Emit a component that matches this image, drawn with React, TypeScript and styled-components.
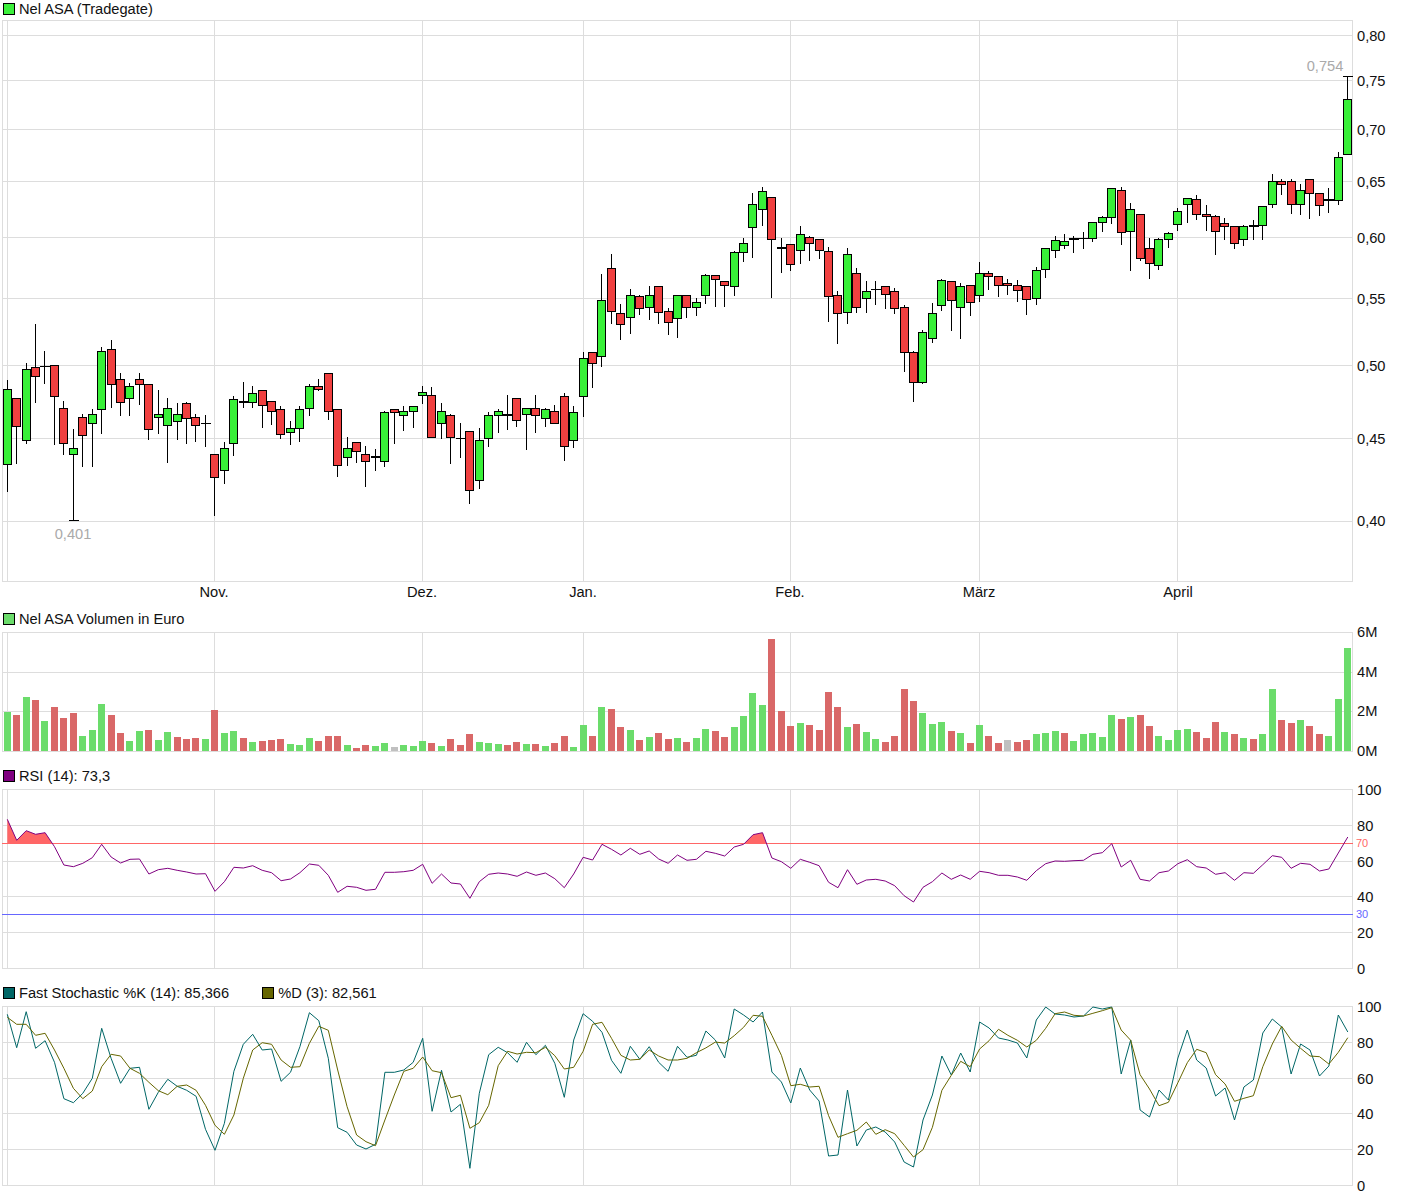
import React from "react";
import styled, { createGlobalStyle } from "styled-components";

const GlobalStyle = createGlobalStyle`
  html, body { margin: 0; padding: 0; background: #fff; }
  body { font-family: "Liberation Sans", Arial, sans-serif; }
`;

const Page = styled.div`
  width: 1410px;
  height: 1200px;
  display: flex;
  flex-direction: column;
  background: #fff;
  overflow: hidden;
`;
const Legend = styled.div`
  height: 18px;
  display: flex;
  align-items: center;
  gap: 4px;
  padding-left: 3px;
  font-size: 14.67px;
  line-height: 18px;
  color: #111;
`;
const Swatch = styled.span<{ $color: string; $offset?: number }>`
  width: 10px;
  height: 10px;
  flex: none;
  border: 1px solid #000;
  background: ${(p) => p.$color};
  margin-left: ${(p) => p.$offset ?? 0}px;
`;
const Plot = styled.svg`
  display: block;
  flex: none;
  width: 1410px;
  overflow: visible;
`;
const AxisText = styled.text`
  font-family: "Liberation Sans", Arial, sans-serif;
  font-size: 14.67px;
  fill: #111;
`;
const MonthText = styled(AxisText)`
  text-anchor: middle;
`;
const ExtremeText = styled.text`
  font-family: "Liberation Sans", Arial, sans-serif;
  font-size: 14.67px;
  fill: #aaa;
  text-anchor: middle;
`;
const LevelText = styled.text<{ $color: string }>`
  font-family: "Liberation Sans", Arial, sans-serif;
  font-size: 11px;
  fill: ${(p) => p.$color};
`;
const GridLine = styled.line`
  stroke: #ddd;
  stroke-width: 1;
  shape-rendering: crispEdges;
`;
const LevelLine = styled.line<{ $color: string }>`
  stroke: ${(p) => p.$color};
  stroke-width: 1;
  shape-rendering: crispEdges;
`;
const Wick = styled.line`
  stroke: #000;
  stroke-width: 1;
  shape-rendering: crispEdges;
`;
const Body = styled.rect<{ $up: boolean }>`
  fill: ${(p) => (p.$up ? "#38f038" : "#f04040")};
  stroke: #000;
  stroke-width: 1;
  shape-rendering: crispEdges;
`;
const VolumeBar = styled.rect<{ $kind: string }>`
  fill: ${(p) => (p.$kind === "g" ? "#6bdc6b" : p.$kind === "r" ? "#d96868" : "#c0c0c0")};
  shape-rendering: crispEdges;
`;
const Curve = styled.polyline<{ $color: string }>`
  fill: none;
  stroke: ${(p) => p.$color};
  stroke-width: 1;
`;
const OverFill = styled.polygon`
  fill: #ff6666;
  stroke: none;
`;

const cx = (i: number) => Math.floor(7.2 + 9.44 * i) + 0.5;
const cxSmooth = (i: number) => 7.3 + 9.44 * i;

const months: [string, number][] = [
  ["Nov.", 214],
  ["Dez.", 422],
  ["Jan.", 583],
  ["Feb.", 790],
  ["März", 979],
  ["April", 1178],
];
const verticals = [2, 7, 214, 422, 583, 790, 979, 1177, 1352];

const candleSrc = `g380,389,464,491 r398,398,426,463 g363,369,440,443 r324,367,376,402 d351,366,366,383 r365,365,396,444 r401,408,443,454 g429,448,454,520 r414,417,435,466 g409,414,423,466
g347,351,409,433 r340,349,384,407 r373,379,402,415 g383,386,398,415 r373,379,384,404 r384,384,429,439 g390,414,417,433 g398,408,425,462 g403,414,421,439 r402,403,418,443
r414,417,425,441 d415,423,423,446 r454,454,477,515 g442,448,470,483 g396,399,443,455 t382,401,401,407 g386,393,402,407 r390,390,405,427 r401,401,411,424 r406,409,434,438
g421,428,432,444 g406,409,428,441 g384,386,408,415 r379,386,389,390 r373,373,411,419 r409,409,465,476 g437,448,457,465 r442,442,451,462 r446,454,461,486 t449,456,456,470
g411,412,461,466 r409,409,412,443 g406,411,415,430 g406,406,411,427 g386,392,395,403 r387,395,437,437 g403,411,423,438 r414,415,437,463 d423,438,438,457 r431,431,490,503
g428,440,480,488 g412,415,438,446 g409,411,415,432 t395,414,414,429 r398,398,420,426 g408,408,414,449 r395,408,415,432 g408,409,418,426 r405,411,423,423 r393,396,446,460
g406,412,440,447 g352,358,396,416 r352,352,363,387 g274,300,356,366 r254,268,311,323 r304,313,324,339 g289,295,317,333 r295,296,308,314 g286,295,307,319 r286,286,312,323
r308,311,322,334 g295,295,318,337 r295,295,307,317 g298,302,307,315 g274,275,295,303 r275,275,279,306 r281,281,285,306 g251,252,286,295 g238,243,252,261 g193,204,227,257
g187,191,209,225 r197,197,239,297 t238,247,247,272 r244,244,264,270 g226,234,250,263 r236,237,243,260 r239,239,250,258 r247,251,296,321 r291,295,313,343 g248,254,312,323
r268,273,307,312 g281,291,298,312 d281,289,289,304 r286,286,294,308 r288,291,308,313 r305,307,352,371 r351,352,382,401 g330,332,382,383 g303,313,338,342 g279,280,305,310
r281,281,300,330 g283,286,307,338 r285,285,302,315 g262,273,295,301 r271,273,276,289 r276,276,285,296 r279,283,285,294 r280,285,290,301 r286,286,299,314 g267,270,298,304
g248,248,269,277 g236,240,250,257 g234,241,245,248 t236,238,238,252 d232,238,238,248 g222,222,238,241 g216,217,222,231 g188,188,217,223 r187,190,232,244 g203,209,231,270
r214,214,258,260 r238,248,263,278 g238,239,265,269 g232,233,239,247 g208,211,224,230 g198,198,204,222 r195,199,214,219 r205,214,216,230 r215,216,231,254 r218,223,226,239
r226,226,243,248 g225,226,239,245 t220,225,225,239 g206,206,225,239 g174,181,204,207 r179,181,184,194 r179,181,204,213 g184,190,204,214 r179,179,193,218 r193,193,205,215
t188,199,199,212 g152,157,200,204 g76,99,154,154`;

const candles = candleSrc
  .trim()
  .split(/\s+/)
  .map((s) => {
    const [hi, top, bot, lo] = s.slice(1).split(",").map(Number);
    return { kind: s[0], hi, top, bot, lo };
  });

const parseVol = (src: string, base: number) =>
  src
    .trim()
    .split(/\s+/)
    .map((s) => ({ kind: s.slice(-1), h: Math.round((base - parseInt(s, 10)) / 3) }));

const volumes = [
  ...parseVol(
    `306g 315r 261g 270r 333g 291r 324r 309r 378g 360g 282g 315r 369r 393g 363g 360r 390g 366g 381r 387r 384r 387g 300r 369g 363g 384r 396g 393r 390r 387r 402g 405g 384g 393r 378r 378r 405g 414r 405r 408g 399g 411n 405g 408g 393g 399r 408g 387r 405r 372r`,
    424
  ),
  ...parseVol(
    `336g 339g 342g 345r 336r 342g 342r 348g 339r 318r 351g 285g 318r 231g 237r 291r 300g 330r 321g 309r 327r 324g 336r 324g 297g 303r 321r 291g 258g 189g 225g 27r 243r 288r 279g 285r 300r 186r 231r 291g 282r 306g 327g 336r 318r 177r 213r 249g 282g 276g`,
    364
  ),
  ...parseVol(
    `303r 309g 339r 285g 318r 339r 330n 336r 330r 312g 309g 303g 309r 333g 312g 309g 321g 255g 267r 261g 255r 288r 318g 330g 300g 297g 306r 324r 276r 306g 312r 324g 327r 312g 177g 270r 279r 270g 288r 312r 318g 207g 54g`,
    364
  ),
];

const rsiRaw = [
  163, 226, 197, 208, 203, 245, 300, 305, 295, 278, 238, 276, 294, 283, 282, 327, 314, 310, 316, 321, 327, 326, 379, 350, 307, 309, 302, 316, 323, 347, 342, 323, 297, 301, 331, 382, 364, 367, 376, 373, 322, 322, 320, 316, 298, 355, 327, 354, 357, 400, 350, 328, 324, 327, 334, 321, 331, 324, 341, 368, 327, 277, 285, 238, 253, 270, 250, 268, 258, 282, 295, 270, 286, 283,
  259, 265, 273, 246, 238, 209, 203, 279, 290, 310, 283, 292, 302, 352, 368, 314, 358, 345, 343, 348, 362, 392, 411, 367, 350, 324, 343, 330, 343, 319, 323, 331, 331, 336, 346, 317, 296, 288, 289, 287, 286, 268, 263, 236, 306, 286, 343, 348, 323, 318, 296, 284, 305, 309, 328, 323, 346, 323, 325, 299, 272, 277, 310, 295, 298, 318, 312, 264, 216,
];
const rsiPoints = rsiRaw.map((v, i) => `${cxSmooth(i).toFixed(1)},${(765 + v / 3).toFixed(1)}`);

const kHead = [
  103, 203, 95, 205, 182, 247, 356, 368, 340, 295, 145, 235, 310, 265, 262, 388, 337, 298, 319, 331, 349, 448, 511, 430, 274, 193, 163, 210, 207, 304, 277, 200, 98, 122, 235, 443, 457, 495, 507, 493, 277, 277, 270, 247, 175, 394, 271, 396, 373, 565, 340, 224, 202, 218, 247, 187, 224, 196, 250, 352, 180, 101, 124, 157, 241, 280, 199, 238, 200, 247, 274, 199, 232, 226,
];
const kTail = [
  1031, 1040, 1058, 1009, 1015, 1022, 1012, 1072, 1082, 1103, 1068, 1090, 1101, 1156, 1155, 1090, 1146, 1130, 1127, 1132, 1142, 1162, 1167, 1120, 1095, 1056, 1075, 1053, 1072, 1022, 1028, 1038, 1040, 1043, 1058, 1020, 1007, 1014, 1015, 1017, 1016, 1007, 1009, 1007, 1074, 1040, 1110, 1117, 1090, 1100, 1058, 1030, 1060, 1068, 1096, 1088, 1120, 1087, 1080, 1033, 1019, 1027, 1074, 1044, 1050, 1076, 1066, 1015, 1032,
];
const kY = [...kHead.map((v) => 980 + v / 3), ...kTail];
const dHead = [
  112, 133, 133, 166, 160, 210, 265, 325, 356, 333, 260, 223, 228, 265, 280, 307, 332, 344, 319, 315, 331, 376, 436, 463, 405, 295, 210, 188, 193, 240, 262, 260, 190, 139, 151, 270, 380, 465, 485, 497, 420, 345, 274, 265, 231, 272, 278, 353, 346, 445, 428, 376, 257, 214, 222, 217, 218, 202, 227, 267, 262, 214, 133, 127, 175, 226, 240, 238, 210, 228, 240, 240, 235, 218,
];
const dY = kY.map((_, i) => (i < dHead.length ? 980 + dHead[i] / 3 : (kY[i] + kY[i - 1] + kY[i - 2]) / 3));
const toPoints = (ys: number[]) => ys.map((y, i) => `${cxSmooth(i).toFixed(1)},${y.toFixed(1)}`).join(" ");

interface GridProps {
  top: number;
  bottom: number;
  rows: number[];
}
const Grid: React.FC<GridProps> = ({ top, bottom, rows }) => (
  <g>
    {rows.map((y) => (
      <GridLine key={`h${y}`} x1={2} x2={1353} y1={y + 0.5} y2={y + 0.5} />
    ))}
    {verticals.map((x) => (
      <GridLine key={`v${x}`} x1={x + 0.5} x2={x + 0.5} y1={top} y2={bottom + 1} />
    ))}
  </g>
);

const AxisLabels: React.FC<{ items: [string, number][] }> = ({ items }) => (
  <g>
    {items.map(([t, y]) => (
      <AxisText key={t} x={1357} y={y + 5}>
        {t}
      </AxisText>
    ))}
  </g>
);

const Candle: React.FC<{ i: number }> = ({ i }) => {
  const c = candles[i];
  const x = cx(i);
  const flat = c.kind === "d" || c.kind === "t";
  return (
    <g>
      <Wick x1={x} x2={x} y1={c.hi} y2={c.lo + 1} />
      {i === 7 && <Wick x1={x - 4.5} x2={x + 5} y1={c.lo + 0.5} y2={c.lo + 0.5} />}
      {i === 142 && <Wick x1={x - 4.5} x2={x + 5} y1={c.hi + 0.5} y2={c.hi + 0.5} />}
      {flat ? (
        <>
          <Wick x1={x - 4.5} x2={x + 5} y1={c.top + 0.5} y2={c.top + 0.5} />
          {c.kind === "t" && <Wick x1={x - 4.5} x2={x + 5} y1={c.top + 1.5} y2={c.top + 1.5} />}
        </>
      ) : (
        <Body $up={c.kind === "g"} x={x - 4} y={c.top + 0.5} width={8} height={c.bot - c.top} />
      )}
    </g>
  );
};

const MainChart: React.FC = () => (
  <Plot viewBox="0 18 1410 592" height={592}>
    <Grid top={20} bottom={581} rows={[20, 35, 80, 129, 181, 237, 298, 365, 438, 521, 581]} />
    {candles.map((_, i) => (
      <Candle key={i} i={i} />
    ))}
    <ExtremeText x={1325} y={71}>0,754</ExtremeText>
    <ExtremeText x={73} y={539}>0,401</ExtremeText>
    <AxisLabels
      items={[
        ["0,80", 36],
        ["0,75", 81],
        ["0,70", 130],
        ["0,65", 182],
        ["0,60", 238],
        ["0,55", 299],
        ["0,50", 366],
        ["0,45", 439],
        ["0,40", 521],
      ]}
    />
    {months.map(([m, x]) => (
      <MonthText key={m} x={x} y={597}>
        {m}
      </MonthText>
    ))}
  </Plot>
);

const VolumeChart: React.FC = () => (
  <Plot viewBox="0 628 1410 139" height={139}>
    <Grid top={632} bottom={751} rows={[632, 672, 711, 751]} />
    {volumes.map((v, i) => (
      <VolumeBar key={i} $kind={v.kind} x={Math.floor(cx(i)) - 3} y={751 - v.h} width={7} height={v.h} />
    ))}
    <AxisLabels
      items={[
        ["6M", 632],
        ["4M", 672],
        ["2M", 711],
        ["0M", 751],
      ]}
    />
  </Plot>
);

const RsiChart: React.FC = () => (
  <Plot viewBox="0 785 1410 199" height={199}>
    <defs>
      <clipPath id="rsi-over">
        <rect x={0} y={785} width={800} height={58} />
      </clipPath>
    </defs>
    <Grid top={789} bottom={968} rows={[789, 825, 861, 896, 932, 968]} />
    <OverFill clipPath="url(#rsi-over)" points={`7.3,843 ${rsiPoints.join(" ")} 1347.8,843`} />
    <LevelLine $color="#ff6666" x1={2} x2={1353} y1={843.5} y2={843.5} />
    <LevelLine $color="#6666ff" x1={2} x2={1353} y1={914.5} y2={914.5} />
    <Curve $color="#800080" points={rsiPoints.join(" ")} />
    <LevelText $color="#ff6666" x={1356} y={847}>70</LevelText>
    <LevelText $color="#6666ff" x={1356} y={918}>30</LevelText>
    <AxisLabels
      items={[
        ["100", 790],
        ["80", 826],
        ["60", 862],
        ["40", 897],
        ["20", 933],
        ["0", 969],
      ]}
    />
  </Plot>
);

const StochChart: React.FC = () => (
  <Plot viewBox="0 1002 1410 198" height={198}>
    <Grid top={1006} bottom={1185} rows={[1006, 1042, 1078, 1113, 1149, 1185]} />
    <Curve $color="#006666" points={toPoints(kY)} />
    <Curve $color="#666600" points={toPoints(dY)} />
    <AxisLabels
      items={[
        ["100", 1007],
        ["80", 1043],
        ["60", 1079],
        ["40", 1114],
        ["20", 1150],
        ["0", 1186],
      ]}
    />
  </Plot>
);

export default function App() {
  return (
    <Page>
      <GlobalStyle />
      <Legend>
        <Swatch $color="#3cf03c" />
        Nel ASA (Tradegate)
      </Legend>
      <MainChart />
      <Legend>
        <Swatch $color="#6bdc6b" />
        Nel ASA Volumen in Euro
      </Legend>
      <VolumeChart />
      <Legend>
        <Swatch $color="#800080" />
        RSI (14): 73,3
      </Legend>
      <RsiChart />
      <Legend>
        <Swatch $color="#006666" />
        Fast Stochastic %K (14): 85,366
        <Swatch $color="#666600" $offset={29} />
        %D (3): 82,561
      </Legend>
      <StochChart />
    </Page>
  );
}
